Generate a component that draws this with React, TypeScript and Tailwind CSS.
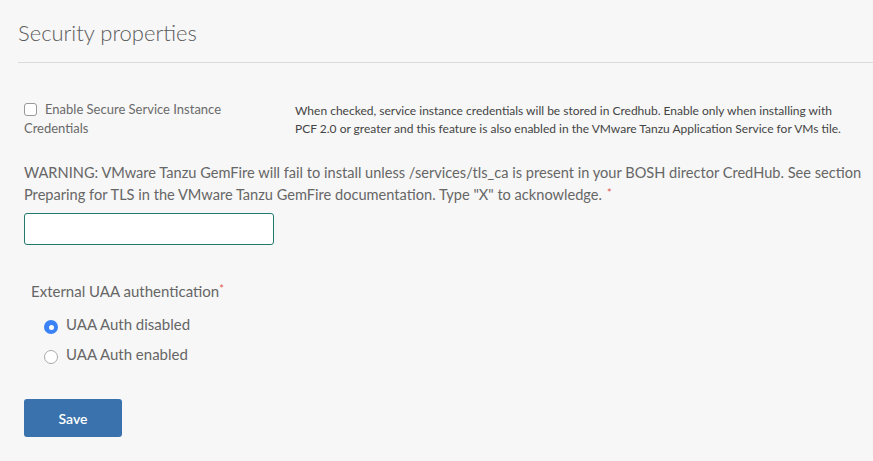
export default function App() {
  return (
    <div
      className="min-h-[461px] w-full bg-[#f7f7f7] text-[#666]"
      style={{ fontFamily: '"Source Sans Pro", Lato, "Open Sans", sans-serif' }}
    >
      <div className="pl-[18px] pt-[18px]">
        <h2 className="text-[22px] leading-[30px] font-light text-[#5c5c5c]">Security properties</h2>
        <div className="mt-[14px] h-px bg-[#dcdcdc]" />
      </div>

      <div className="pl-6 pr-2">
        <div className="mt-[37px] flex">
          <label className="w-[260px] text-[13px] leading-[19px] text-[#6a6a6a]">
            <input
              type="checkbox"
              className="mr-2 h-[13px] w-[13px] translate-y-[2px] appearance-none rounded-[3px] border border-[#999] bg-white align-baseline"
            />
            Enable Secure Service Instance Credentials
          </label>
          <p className="ml-[11px] mt-[2px] text-[12px] leading-[18px] text-[#444]">
            When checked, service instance credentials will be stored in Credhub. Enable only when installing with
            <br />
            PCF 2.0 or greater and this feature is also enabled in the VMware Tanzu Application Service for VMs tile.
          </p>
        </div>

        <p className="mt-[24px] text-[14.6px] leading-[22px] text-[#666]">
          WARNING: VMware Tanzu GemFire will fail to install unless /services/tls_ca is present in your BOSH director CredHub. See section
          <br />
          Preparing for TLS in the VMware Tanzu GemFire documentation. Type "X" to acknowledge.
          <span className="ml-[5px] align-top text-[11px] leading-[18px] text-[#e05a4f]">*</span>
        </p>

        <input
          type="text"
          className="mt-[7px] block h-[32px] w-[250px] rounded-[3px] border border-[#1f7a6c] bg-white outline-none"
        />

        <div className="mt-[35px] pl-[7px] text-[15px] leading-[22px]">
          External UAA authentication<span className="align-top text-[11px] leading-[18px] text-[#e05a4f]">*</span>
        </div>

        <div className="mt-[11px] flex flex-col gap-[8px] pl-5 text-[15px] leading-[22px]">
          <label className="flex items-center gap-2">
            <span className="flex h-[14px] w-[14px] translate-y-[3px] items-center justify-center rounded-full bg-[#3b82f6]">
              <span className="h-[5px] w-[5px] rounded-full bg-white" />
            </span>
            UAA Auth disabled
          </label>
          <label className="flex items-center gap-2">
            <span className="h-[14px] w-[14px] translate-y-[3px] rounded-full border border-[#aaa] bg-white" />
            UAA Auth enabled
          </label>
        </div>

        <button className="mt-[34px] h-[38px] w-[98px] rounded-[3px] bg-[#3a72ad] text-[14px] font-semibold text-white">
          Save
        </button>
      </div>
    </div>
  );
}
